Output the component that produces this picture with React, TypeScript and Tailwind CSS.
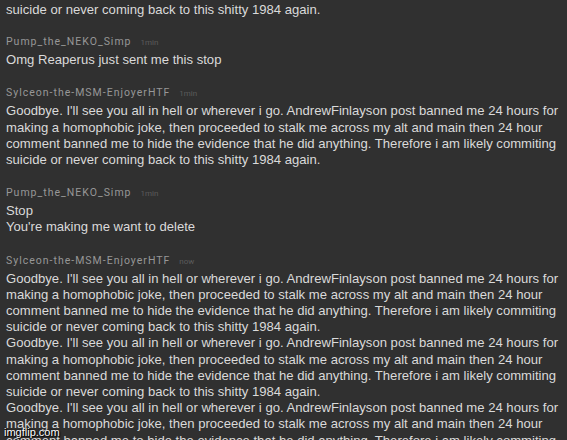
const GOODBYE = [
  "Goodbye. I'll see you all in hell or wherever i go. AndrewFinlayson post banned me 24 hours for",
  'making a homophobic joke, then proceeded to stalk me across my alt and main then 24 hour',
  'comment banned me to hide the evidence that he did anything. Therefore i am likely commiting',
  'suicide or never coming back to this shitty 1984 again.',
];

interface CommentProps {
  user: string;
  time: string;
  lines: string[];
}

function Comment({ user, time, lines }: CommentProps) {
  return (
    <div className="mt-[18px] first-of-type:mt-[17px]">
      <div className="flex items-baseline gap-[9px] h-[14px] leading-[14px] font-['Roboto',sans-serif]">
        <span className="text-[10.5px] tracking-[1px] text-[#979797]">{user}</span>
        <span className="text-[8px] text-[#5c5c5c]">{time}</span>
      </div>
      <div className="mt-[3px]">
        {lines.map((l, i) => (
          <div key={i} className="whitespace-nowrap">{l}</div>
        ))}
      </div>
    </div>
  );
}

export default function App() {
  return (
    <div className="relative w-[567px] h-[440px] overflow-hidden bg-[#303030] text-[#dadada] text-[13.1px] leading-[16.2px] font-['Liberation_Sans',Arial,sans-serif]">
      <div className="px-[6px] pt-[2px]">
        <p className="whitespace-nowrap">suicide or never coming back to this shitty 1984 again.</p>
        <Comment user="Pump_the_NEKO_Simp" time="1min" lines={['Omg Reaperus just sent me this stop']} />
        <Comment user="Sylceon-the-MSM-EnjoyerHTF" time="1min" lines={GOODBYE} />
        <Comment user="Pump_the_NEKO_Simp" time="1min" lines={['Stop', "You're making me want to delete"]} />
        <Comment user="Sylceon-the-MSM-EnjoyerHTF" time="now" lines={[...GOODBYE, ...GOODBYE, ...GOODBYE]} />
      </div>
      <div className="absolute left-[4px] bottom-[2px] text-[11px] leading-[11px] text-white [text-shadow:0_0_2px_#000,1px_1px_1px_#000]">
        imgflip.com
      </div>
    </div>
  );
}
